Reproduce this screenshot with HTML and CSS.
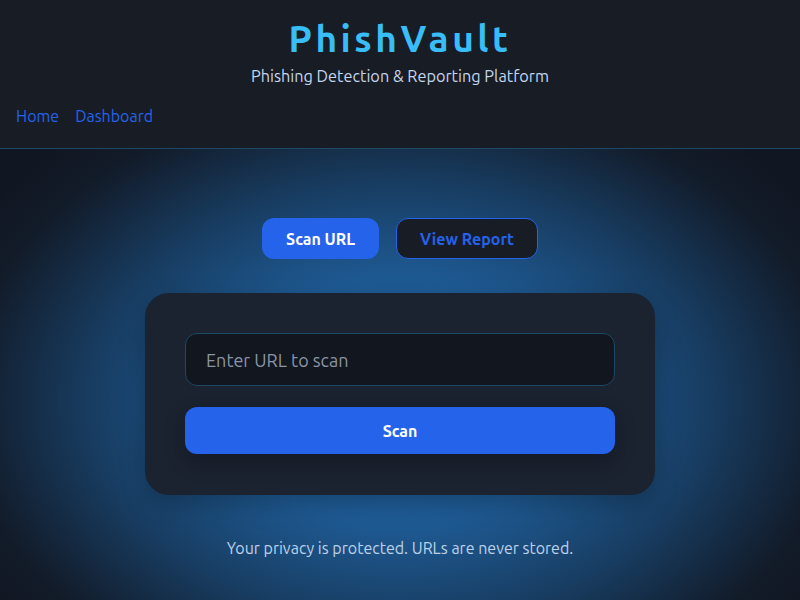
FILE: index.html
```html
<!DOCTYPE html>
<html lang="en">
<head>
<meta charset="utf-8">
<title>PhishVault</title>
<link rel="stylesheet" href="styles.css">
</head>
<body>
<header class="site-header">
  <h1 class="brand">PhishVault</h1>
  <p class="tagline">Phishing Detection &amp; Reporting Platform</p>
  <nav class="nav">
    <a href="#" class="nav-link">Home</a>
    <a href="#" class="nav-link">Dashboard</a>
  </nav>
</header>
<main class="main">
  <div class="tabs">
    <button class="tab tab-active">Scan URL</button>
    <button class="tab tab-outline">View Report</button>
  </div>
  <section class="card">
    <input class="url-input" type="text" placeholder="Enter URL to scan">
    <button class="scan-btn">Scan</button>
  </section>
  <p class="note">Your privacy is protected. URLs are never stored.</p>
</main>
</body>
</html>
```
FILE: styles.css
```css
* { box-sizing: border-box; }
html, body { margin: 0; height: 100%; }
body {
  font-family: "Ubuntu", "Noto Sans", "Open Sans", sans-serif;
  background: #111722;
  color: #cbd5e1;
  overflow: hidden;
}
.site-header {
  background: #181c24;
  height: 149px;
  border-bottom: 1px solid #1d4866;
  padding-top: 17px;
}
.brand {
  margin: 0;
  text-align: center;
  font-size: 37px;
  line-height: 44px;
  font-weight: 700;
  letter-spacing: 3.5px;
  color: #38bdf8;
}
.tagline {
  margin: 4px 0 0;
  text-align: center;
  font-size: 16.3px;
  line-height: 22px;
  color: #c4d6ee;
}
.nav {
  display: flex;
  gap: 16px;
  padding: 18px 16px 0;
}
.nav-link {
  color: #2563eb;
  text-decoration: none;
  font-size: 16px;
  line-height: 22px;
}
.main {
  height: 451px;
  background: radial-gradient(ellipse 62% 78% at 50% 56%, #2164a3 0%, #1e5a93 35%, #183d62 62%, #121b29 88%, #111722 100%);
  display: flex;
  flex-direction: column;
  align-items: center;
  padding-top: 69px;
}
.tabs {
  display: flex;
  gap: 17px;
}
.tab {
  font-family: inherit;
  font-size: 16px;
  font-weight: 700;
  height: 41px;
  border-radius: 12px;
  padding: 0 23px;
  cursor: pointer;
}
.tab-active {
  background: #2563eb;
  color: #ffffff;
  border: none;
  padding: 0 24px;
}
.tab-outline {
  background: #181c24;
  color: #2563eb;
  border: 1px solid #2563eb;
}
.card {
  margin-top: 34px;
  width: 510px;
  background: #1b2230;
  border-radius: 24px;
  padding: 40px 40px 41px;
  display: flex;
  flex-direction: column;
  gap: 21px;
  box-shadow: 0 8px 24px rgba(0, 0, 0, 0.25);
}
.url-input {
  width: 100%;
  height: 53px;
  background: #11161f;
  border: 1px solid #1d4866;
  border-radius: 12px;
  padding: 0 20px;
  font-family: inherit;
  font-size: 18px;
  color: #e5e7eb;
  outline: none;
}
.url-input::placeholder { color: #8b95a5; }
.scan-btn {
  width: 100%;
  height: 47px;
  background: #2563eb;
  color: #ffffff;
  border: none;
  border-radius: 12px;
  font-family: inherit;
  font-size: 16px;
  font-weight: 700;
  box-shadow: 0 8px 20px rgba(0, 0, 0, 0.25);
}
.note {
  margin: 43px 0 0;
  font-size: 16px;
  line-height: 20px;
  color: #bdd2ea;
}
```
